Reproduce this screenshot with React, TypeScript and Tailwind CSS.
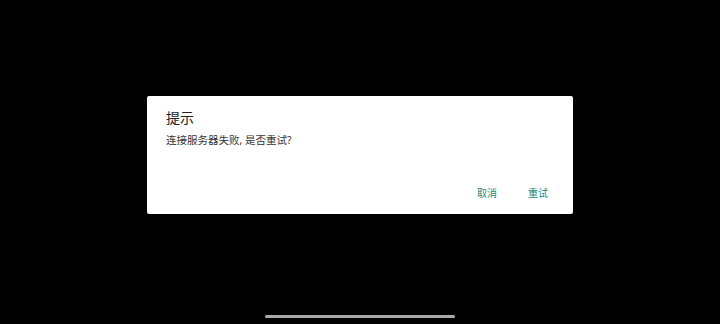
export default function App() {
  return (
    <div
      className="flex h-[324px] w-[720px] flex-col items-center bg-black"
      style={{ fontFamily: '"Noto Sans", "Noto Sans CJK SC", sans-serif' }}
    >
      <div className="mt-[96px] flex h-[118px] w-[426px] flex-col rounded-[2px] bg-white">
        <div className="px-[19px] pt-[12px]">
          <h2 className="text-[14px] leading-[20px] text-[#212121]">提示</h2>
          <p className="mt-[5px] text-[10.5px] leading-[15px] text-[#333333]">连接服务器失败, 是否重试?</p>
        </div>
        <div className="mt-auto flex justify-end gap-[31px] pb-[14px] pr-[25px]">
          <button className="text-[10px] leading-[14px] text-[#1a8a80]">取消</button>
          <button className="text-[10px] leading-[14px] text-[#1a8a80]">重试</button>
        </div>
      </div>
      <div className="mb-[6px] mt-auto h-[3px] w-[190px] rounded-full bg-[#a8a8a8]" />
    </div>
  )
}
